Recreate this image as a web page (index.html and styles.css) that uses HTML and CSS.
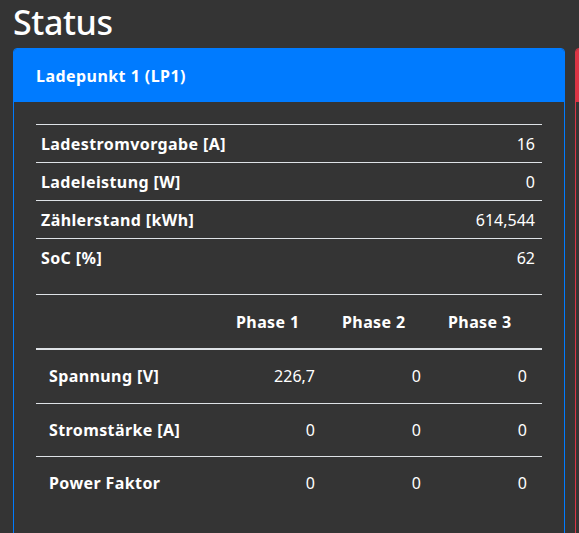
FILE: index.html
```html
<!DOCTYPE html>
<html lang="de">
<head>
  <meta charset="UTF-8">
  <meta name="viewport" content="width=device-width, initial-scale=1.0">
  <title>Status</title>
  <link rel="stylesheet" href="styles.css">
</head>
<body>
  <div class="page">
    <h1>Status</h1>
    <div class="cards">
      <div class="card card-blue">
        <div class="card-header">Ladepunkt 1 (LP1)</div>
        <div class="card-body">
          <table class="info-table">
            <tbody>
              <tr><th>Ladestromvorgabe [A]</th><td>16</td></tr>
              <tr><th>Ladeleistung [W]</th><td>0</td></tr>
              <tr><th>Zählerstand [kWh]</th><td>614,544</td></tr>
              <tr><th>SoC [%]</th><td>62</td></tr>
            </tbody>
          </table>
          <table class="phase-table">
            <colgroup>
              <col class="col-label">
              <col class="col-phase">
              <col class="col-phase">
              <col class="col-phase">
            </colgroup>
            <thead>
              <tr>
                <th></th>
                <th>Phase 1</th>
                <th>Phase 2</th>
                <th>Phase 3</th>
              </tr>
            </thead>
            <tbody>
              <tr><th>Spannung [V]</th><td>226,7</td><td>0</td><td>0</td></tr>
              <tr><th>Stromstärke [A]</th><td>0</td><td>0</td><td>0</td></tr>
              <tr><th>Power Faktor</th><td>0</td><td>0</td><td>0</td></tr>
            </tbody>
          </table>
        </div>
      </div>
      <!-- second charge point, only its edge is on screen -->
      <div class="card card-red">
        <div class="card-header"></div>
        <div class="card-body"></div>
      </div>
    </div>
  </div>
</body>
</html>
```

FILE: styles.css
```css
body {
  font-family: "Noto Sans", "Open Sans", sans-serif;
  font-size: 16px;
  line-height: 24px;
  background-color: #343434;
  color: #fff;
  margin: 0;
  padding: 0;
  overflow: hidden;
}

.page {
  padding-left: 13px;
}

h1 {
  font-size: 34px;
  font-weight: 500;
  letter-spacing: -0.4px;
  line-height: 43px;
  margin: 0;
  padding-top: 1px;
}

.cards {
  display: flex;
  gap: 10px;
  margin-top: 4px;
}

.card {
  flex: 0 0 550px;
  border: 1px solid #007bff;
  border-radius: 4px;
  overflow: hidden;
}

.card-red {
  border-color: #dc3545;
}

.card-header {
  background: #007bff;
  font-weight: bold;
  letter-spacing: 0.45px;
  height: 24px;
  padding: 15px 22px 14px;
}

.card-red .card-header {
  background: #dc3545;
}

.card-body {
  padding: 22px;
  min-height: 400px;
}

table {
  width: 100%;
  border-collapse: collapse;
}

tr {
  border-top: 1px solid #dee2e6;
}

th {
  letter-spacing: 0.4px;
}

.info-table {
  margin-bottom: 18px;
}

.info-table th,
.info-table td {
  padding: 6.5px 7px 6.5px 5px;
}

.info-table th {
  text-align: left;
}

.info-table td {
  text-align: right;
}

.phase-table {
  table-layout: fixed;
  margin-bottom: 16px;
}

.col-label {
  width: 188px;
}

.col-phase {
  width: 106px;
}

.phase-table thead tr {
  border-bottom: 2px solid #dee2e6;
}

.phase-table th,
.phase-table td {
  padding: 14.25px 15px 14.25px 13px;
}

.phase-table thead th {
  padding: 14.5px 12px;
}

.phase-table th {
  text-align: left;
}

.phase-table td {
  text-align: right;
}
```
